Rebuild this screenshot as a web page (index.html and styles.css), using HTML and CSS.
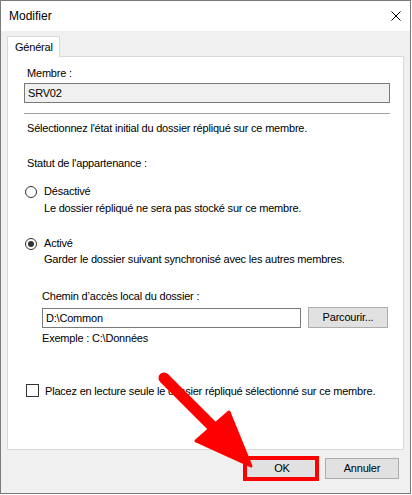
FILE: index.html
```html
<!DOCTYPE html>
<html lang="fr">
<head>
<meta charset="utf-8">
<title>Modifier</title>
<link rel="stylesheet" href="styles.css">
</head>
<body>
<div class="window">
  <div class="titlebar">
    <span class="title">Modifier</span>
    <svg class="close" width="10" height="10" viewBox="0 0 10 10"><path d="M0.5 0.5 L9.5 9.5 M9.5 0.5 L0.5 9.5" stroke="#000" stroke-width="1" fill="none"/></svg>
  </div>
  <div class="content">
    <div class="tabs"><div class="tab">Général</div></div>
    <div class="panel">
      <div class="label lbl-membre">Membre :</div>
      <div class="textbox readonly">SRV02</div>
      <div class="sep"></div>
      <div class="label lbl-select">Sélectionnez l'état initial du dossier répliqué sur ce membre.</div>
      <div class="label lbl-statut">Statut de l'appartenance :</div>
      <div class="radio-row r1"><span class="radio"></span><span>Désactivé</span></div>
      <div class="desc d1">Le dossier répliqué ne sera pas stocké sur ce membre.</div>
      <div class="radio-row r2"><span class="radio checked"></span><span>Activé</span></div>
      <div class="desc d2">Garder le dossier suivant synchronisé avec les autres membres.</div>
      <div class="sub">
        <div class="label lbl-chemin">Chemin d’accès local du dossier :</div>
        <div class="path-row">
          <div class="textbox path">D:\Common</div>
          <div class="button browse">Parcourir...</div>
        </div>
        <div class="label lbl-ex">Exemple : C:\Données</div>
      </div>
      <div class="check-row"><span class="checkbox"></span><span>Placez en lecture seule le dossier répliqué sélectionné sur ce membre.</span></div>
    </div>
    <div class="buttons">
      <div class="button ok">OK</div>
      <div class="button cancel">Annuler</div>
    </div>
  </div>
  <svg class="annot" width="412" height="495" viewBox="0 0 412 495">
    <line x1="164" y1="378" x2="214" y2="428" stroke="#ff0000" stroke-width="11" stroke-linecap="round"/>
    <polygon points="196,441 229,412 251,466" fill="#ff0000" stroke="#ff0000" stroke-width="3" stroke-linejoin="round"/>
    <rect x="245" y="458" width="72" height="21" fill="none" stroke="#ff0000" stroke-width="4"/>
  </svg>
</div>
</body>
</html>
```

FILE: styles.css
```css
* { box-sizing: border-box; }
html, body { margin: 0; padding: 0; background: #ffffff; }
body {
  font-family: "Liberation Sans", Arial, sans-serif;
  font-size: 11px;
  letter-spacing: -0.2px;
  color: #000;
}
.window {
  position: relative;
  width: 411px;
  height: 494px;
  border: 1px solid #7a7a7a;
  background: #f0f0f0;
  display: flex;
  flex-direction: column;
}
.titlebar {
  height: 30px;
  background: #fff;
  display: flex;
  align-items: center;
  justify-content: space-between;
  padding: 0 9px 0 8px;
}
.title { font-size: 12px; line-height: 14px; letter-spacing: 0; }
.close { display: block; margin-top: 0; }
.content {
  padding: 5px 6px 0 6px;
  display: flex;
  flex-direction: column;
}
.tabs { display: flex; height: 20px; }
.tab {
  position: relative;
  z-index: 1;
  width: 53px;
  height: 21px;
  background: #fff;
  border: 1px solid #d9d9d9;
  border-bottom: none;
  padding: 4px 0 0 7px;
  line-height: 13px;
}
.panel {
  width: 397px;
  height: 394px;
  background: #fff;
  border: 1px solid #d9d9d9;
  padding: 10px 12px 0 16px;
  display: flex;
  flex-direction: column;
}
.label, .desc { line-height: 13px; white-space: nowrap; }
.lbl-membre { padding-left: 3px; }
.textbox {
  height: 20px;
  border: 1px solid #7a7a7a;
  background: #fff;
  padding: 0 3px;
  line-height: 18px;
  white-space: nowrap;
}
.textbox.readonly { background: #f0f0f0; margin-top: 3px; width: 366px; }
.sep { height: 1px; background: #a0a0a0; margin-top: 10px; width: 366px; }
.lbl-select { margin-top: 8px; padding-left: 3px; }
.lbl-statut { margin-top: 22px; padding-left: 3px; }
.radio-row {
  display: flex;
  align-items: center;
  gap: 7px;
  height: 13px;
  line-height: 13px;
  padding-left: 1px;
}
.r1 { margin-top: 15px; }
.r2 { margin-top: 22px; }
.radio {
  width: 12px;
  height: 12px;
  border: 1px solid #333;
  border-radius: 50%;
  background: #fff;
  display: flex;
  align-items: center;
  justify-content: center;
}
.radio.checked::after {
  content: "";
  width: 6px;
  height: 6px;
  border-radius: 50%;
  background: #333;
}
.desc { padding-left: 20px; }
.d1 { margin-top: 4px; }
.d2 { margin-top: 3px; }
.sub { padding-left: 18px; display: flex; flex-direction: column; }
.lbl-chemin { margin-top: 24px; }
.path-row { display: flex; gap: 7px; align-items: flex-start; margin-top: 4px; }
.textbox.path { width: 259px; margin-top: 1px; padding-left: 3px; }
.button {
  background: #e1e1e1;
  border: 1px solid #adadad;
  display: flex;
  align-items: center;
  justify-content: center;
  line-height: 13px;
}
.browse { width: 80px; height: 21px; }
.lbl-ex { margin-top: 4px; }
.check-row {
  display: flex;
  align-items: center;
  gap: 6px;
  margin-top: 39px;
  height: 13px;
  padding-left: 2px;
  white-space: nowrap;
}
.checkbox {
  width: 13px;
  height: 13px;
  border: 1px solid #333;
  background: #fff;
  flex: none;
}
.buttons {
  display: flex;
  justify-content: flex-end;
  gap: 6px;
  margin-top: 8px;
  padding-right: 5px;
}
.ok, .cancel { width: 74px; height: 21px; }
.annot {
  position: absolute;
  left: -1px;
  top: -1px;
  pointer-events: none;
}
```
